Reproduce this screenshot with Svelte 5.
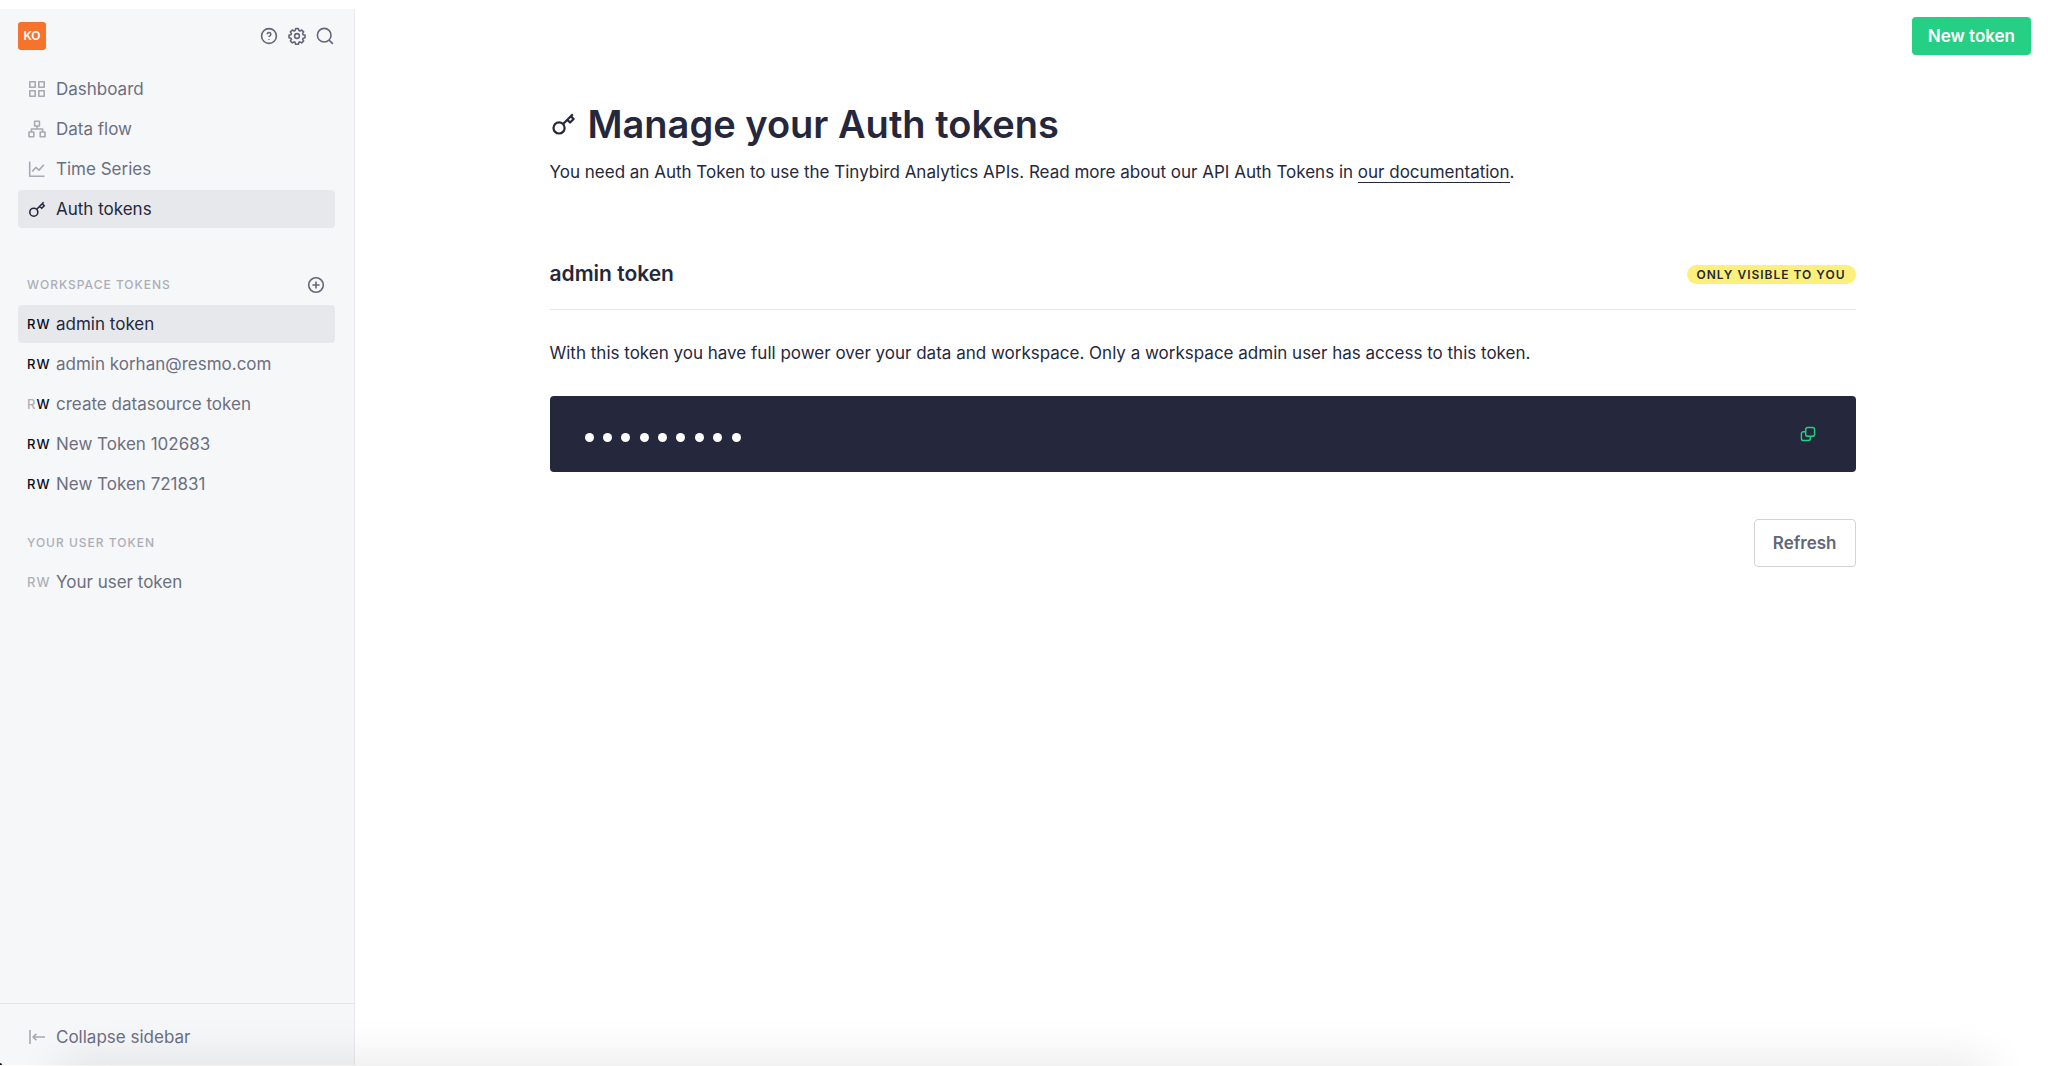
<script>
  const nav = [
    { label: 'Dashboard', icon: 'grid' },
    { label: 'Data flow', icon: 'flow' },
    { label: 'Time Series', icon: 'chart' },
    { label: 'Auth tokens', icon: 'key' }
  ];

  const tokens = [
    { name: 'admin token', read: true, write: true },
    { name: 'admin korhan@resmo.com', read: true, write: true },
    { name: 'create datasource token', read: false, write: true },
    { name: 'New Token 102683', read: true, write: true },
    { name: 'New Token 721831', read: true, write: true }
  ];
  const userTokens = [{ name: 'Your user token', read: false, write: false }];

  let page = $state('Auth tokens');
  let current = $state('admin token');
  const dots = Array.from({ length: 9 });
</script>

{#snippet icon(name)}
  <svg class="icon" viewBox="0 0 18 18" aria-hidden="true">
    {#if name === 'grid'}
      <path d="M1.8 1.8h5.4v5.4H1.8zM10.8 1.8h5.4v5.4h-5.4zM1.8 10.8h5.4v5.4H1.8zM10.8 10.8h5.4v5.4h-5.4z" />
    {:else if name === 'flow'}
      <path d="M6.6 1.2h4.8V6H6.6zM1 12h4.8v4.8H1zM12.2 12H17v4.8h-4.8zM9 6v3M3.4 12V9h11.2v3" />
    {:else if name === 'chart'}
      <path d="M1.7 1.5v14.8h14.8M4.2 11.6l3.6-4.2 3.2 2.7 4.9-5.3" />
    {:else if name === 'key'}
      <circle cx="5.8" cy="12.2" r="4" />
      <path d="M8.7 9.3 15.7 2.3M11.7 6.3l2 2 2.6-2.6-2-2" />
    {:else if name === 'help'}
      <circle cx="9" cy="9" r="7.4" />
      <path d="M7.2 7.3a1.8 1.8 0 1 1 2.7 1.6c-.6.3-.9.7-.9 1.2M9 12.1v.7" />
    {:else if name === 'gear'}
      <circle cx="9" cy="9" r="2.4" />
      <path d="M7.6 1.6h2.8l.5 2 1 .4 1.8-1 1.9 1.9-1 1.8.4 1 2 .4v2.6l-2 .5-.4 1 1 1.8-1.9 1.9-1.8-1-1 .4-.5 2H7.6l-.5-2-1-.4-1.8 1-1.9-1.9 1-1.8-.4-1-2-.5V8.1l2-.4.4-1-1-1.8 1.9-1.9 1.8 1 1-.4z" />
    {:else if name === 'search'}
      <circle cx="8.2" cy="8.2" r="6.8" />
      <path d="m13.1 13.1 3.8 3.8" />
    {:else if name === 'plus'}
      <circle cx="9" cy="9" r="7.3" />
      <path d="M9 5.4v7.2M5.4 9h7.2" />
    {:else if name === 'collapse'}
      <path d="M2 2v14M5 9h12M8.4 5.8 5 9l3.4 3.2" />
    {:else if name === 'copy'}
      <rect x="6.4" y="1.6" width="10" height="10" rx="2.4" />
      <path d="M6.4 6.4H4a2.4 2.4 0 0 0-2.4 2.4V14A2.4 2.4 0 0 0 4 16.4h5.2a2.4 2.4 0 0 0 2.4-2.4v-2.4" />
    {/if}
  </svg>
{/snippet}

{#snippet tokenList(items)}
  <ul class="list">
    {#each items as t (t.name)}
      <li>
        <button class="row" class:active={current === t.name} onclick={() => (current = t.name)}>
          <span class="scope"><span class:on={t.read}>R</span><span class:on={t.write}>W</span></span>
          <span>{t.name}</span>
        </button>
      </li>
    {/each}
  </ul>
{/snippet}

<div class="app">
  <aside class="sidebar">
    <header class="top">
      <button class="workspace" aria-label="Workspace KO">KO</button>
      <div class="tools">
        <button class="tool" aria-label="Help">{@render icon('help')}</button>
        <button class="tool" aria-label="Settings">{@render icon('gear')}</button>
        <button class="tool" aria-label="Search">{@render icon('search')}</button>
      </div>
    </header>

    <nav aria-label="Main">
      <ul class="list">
        {#each nav as item (item.label)}
          <li>
            <a class="row" class:active={page === item.label} href="#top" onclick={() => (page = item.label)}>
              <span class="lead">{@render icon(item.icon)}</span>
              <span>{item.label}</span>
            </a>
          </li>
        {/each}
      </ul>
    </nav>

    <section class="group first">
      <div class="group-head">
        <h2>WORKSPACE TOKENS</h2>
        <button class="tool" aria-label="Add token">{@render icon('plus')}</button>
      </div>
      {@render tokenList(tokens)}
    </section>

    <section class="group">
      <div class="group-head"><h2>YOUR USER TOKEN</h2></div>
      {@render tokenList(userTokens)}
    </section>

    <footer class="foot">
      <button class="row">
        <span class="lead">{@render icon('collapse')}</span>
        <span>Collapse sidebar</span>
      </button>
    </footer>
  </aside>

  <main class="main">
    <div class="bar"><button class="primary">New token</button></div>

    <div class="content">
      <h1><span class="title-icon">{@render icon('key')}</span>Manage your Auth tokens</h1>
      <p class="text">
        You need an Auth Token to use the Tinybird Analytics APIs. Read more about our API Auth Tokens in
        <a class="doc" href="#docs">our documentation</a>.
      </p>

      <div class="token-head">
        <h3>admin token</h3>
        <span class="badge">ONLY VISIBLE TO YOU</span>
      </div>
      <p class="text">
        With this token you have full power over your data and workspace. Only a workspace admin user has access to this
        token.
      </p>

      <div class="secret">
        <div class="dots" role="img" aria-label="Hidden token">
          {#each dots as _}<i></i>{/each}
        </div>
        <button class="copy" aria-label="Copy token">{@render icon('copy')}</button>
      </div>

      <div class="actions"><button class="secondary">Refresh</button></div>
    </div>
  </main>
  <div class="shade"></div>
  <div class="corner"></div>
</div>

<style>
  :global(body) {
    margin: 0;
    background: #fff;
  }
  .app {
    position: relative;
    box-sizing: border-box;
    display: flex;
    min-height: 100vh;
    padding: 9px 0 1px;
    overflow: hidden;
    font-family: Inter, 'Liberation Sans', sans-serif;
    font-size: 17px;
    line-height: 24px;
    color: #25283d;
  }
  button {
    font: inherit;
    color: inherit;
    border: 0;
    padding: 0;
    background: none;
    cursor: pointer;
  }
  h1,
  h2,
  h3,
  p,
  ul {
    margin: 0;
    padding: 0;
  }
  .icon {
    display: block;
    width: 18px;
    height: 18px;
    fill: none;
    stroke: currentColor;
    stroke-width: 1.6;
    stroke-linejoin: round;
  }

  .sidebar {
    box-sizing: border-box;
    flex: 0 0 355px;
    display: flex;
    flex-direction: column;
    background: #f6f7f9;
    border-right: 1px solid #e8e9ed;
  }
  .top {
    display: flex;
    align-items: center;
    justify-content: space-between;
    height: 28px;
    padding: 13px 20px 20px 18px;
  }
  .workspace {
    width: 28px;
    height: 28px;
    border-radius: 3px;
    background: #f6732c;
    color: #fff;
    font-size: 12px;
    font-weight: 600;
    line-height: 28px;
    text-align: center;
  }
  .tools {
    display: flex;
    gap: 10px;
  }
  .tool {
    color: #636679;
  }
  .list {
    display: flex;
    flex-direction: column;
    gap: 2px;
    padding: 0 19px 0 18px;
    list-style: none;
  }
  .row {
    box-sizing: border-box;
    display: flex;
    align-items: center;
    width: 100%;
    height: 38px;
    padding: 0 9px;
    border-radius: 4px;
    color: #6c6f80;
    text-decoration: none;
    text-align: left;
    white-space: nowrap;
  }
  .active {
    background: #e7e8ec;
    color: #25283d;
  }
  .lead,
  .scope {
    box-sizing: border-box;
    flex: 0 0 29px;
  }
  .lead {
    padding-left: 1px;
    color: #a8a9b3;
  }
  .active .lead {
    color: #25283d;
  }
  .scope {
    font-size: 13px;
    font-weight: 500;
    letter-spacing: 1px;
    color: #b0b1b8;
  }
  .scope .on {
    color: #0b0b14;
  }
  .group {
    padding-top: 29px;
  }
  .first {
    padding-top: 46px;
  }
  .group-head {
    display: flex;
    align-items: center;
    justify-content: space-between;
    height: 22px;
    padding: 0 29px 9px 27px;
  }
  h2 {
    font-size: 12px;
    font-weight: 500;
    letter-spacing: 1px;
    color: #acaeb7;
  }
  .foot {
    margin-top: auto;
    padding: 14px 19px 9px 18px;
    border-top: 1px solid #e4e5e9;
  }

  .main {
    flex: 1;
    min-width: 0;
    padding-left: 2px;
  }
  .bar {
    display: flex;
    justify-content: flex-end;
    padding: 8px 17px 0;
  }
  .primary {
    height: 38px;
    padding: 0 16px;
    border-radius: 4px;
    background: #25cf84;
    color: #fff;
    font-weight: 600;
  }
  .content {
    max-width: 1306px;
    margin: 0 auto;
    padding: 45px 24px 0;
  }
  h1 {
    display: flex;
    align-items: center;
    font-size: 38px;
    font-weight: 600;
    line-height: 48px;
  }
  .title-icon {
    box-sizing: border-box;
    width: 38px;
    padding: 0 0 2px 1px;
  }
  .title-icon .icon {
    width: 25px;
    height: 25px;
  }
  h1 + .text {
    padding-top: 12px;
  }
  .doc {
    color: inherit;
    text-decoration: none;
    border-bottom: 1px solid #25283d;
  }
  .token-head {
    display: flex;
    align-items: center;
    justify-content: space-between;
    margin: 76px 0 31px;
    padding-bottom: 21px;
    border-bottom: 1px solid #e4e5e9;
  }
  h3 {
    font-size: 21px;
    font-weight: 600;
    line-height: 28px;
  }
  .badge {
    padding: 0 10px;
    border-radius: 10px;
    background: #fdf07a;
    font-size: 12px;
    font-weight: 600;
    line-height: 19px;
    letter-spacing: 1px;
  }
  .secret {
    display: flex;
    align-items: center;
    justify-content: space-between;
    height: 76px;
    margin-top: 31px;
    padding: 0 40px 0 35px;
    border-radius: 4px;
    background: #25283d;
  }
  .dots {
    display: flex;
    justify-content: space-between;
    width: 156px;
    padding-top: 6px;
  }
  .dots i {
    width: 9px;
    height: 9px;
    border-radius: 50%;
    background: #fff;
  }
  .copy {
    color: #25cf84;
  }
  .copy .icon {
    width: 16px;
    height: 16px;
  }
  .actions {
    display: flex;
    justify-content: flex-end;
    padding-top: 47px;
  }
  .secondary {
    height: 48px;
    padding: 0 18px;
    border: 1px solid #d2d3d8;
    border-radius: 4px;
    background: #fff;
    color: #636679;
    font-weight: 600;
  }
  .shade {
    position: absolute;
    right: 64px;
    bottom: -20px;
    left: 64px;
    height: 20px;
    box-shadow: 0 0 44px 6px rgba(0, 0, 0, 0.1);
    pointer-events: none;
  }
  .corner {
    position: absolute;
    bottom: 1px;
    left: 0;
    width: 2px;
    height: 2px;
    border-top-right-radius: 2px;
    background: #111;
    pointer-events: none;
  }
</style>
